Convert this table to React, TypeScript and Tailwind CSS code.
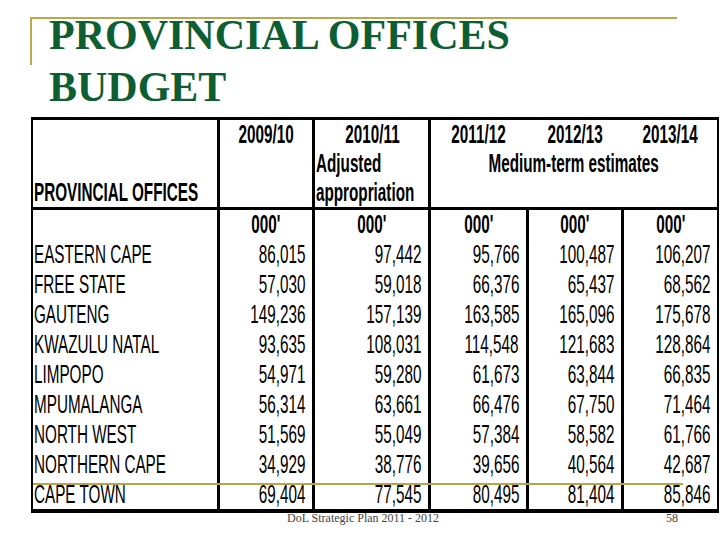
import React from 'react';

type Align = 'left' | 'right' | 'center';

const origins: Record<Align, string> = {
  left: 'origin-left',
  right: 'origin-right',
  center: 'origin-center',
};

// Arial Narrow look: Liberation Sans squeezed horizontally
const Sq = ({ children, align = 'left' }: { children: React.ReactNode; align?: Align }) => (
  <span className={`inline-block shrink-0 whitespace-nowrap scale-x-[0.61] ${origins[align]}`}>{children}</span>
);

const cols = [
  'w-[184px]',
  'w-[95px] border-l-[3px] border-black',
  'w-[116px] border-l-[3px] border-black',
  'w-[98px] border-l-[3px] border-black',
  'w-[95px] border-l-[3px] border-black',
  'w-[96px] border-l-[3px] border-black',
];

const rows: [string, string[]][] = [
  ['EASTERN CAPE', ['86,015', '97,442', '95,766', '100,487', '106,207']],
  ['FREE STATE', ['57,030', '59,018', '66,376', '65,437', '68,562']],
  ['GAUTENG', ['149,236', '157,139', '163,585', '165,096', '175,678']],
  ['KWAZULU NATAL', ['93,635', '108,031', '114,548', '121,683', '128,864']],
  ['LIMPOPO', ['54,971', '59,280', '61,673', '63,844', '66,835']],
  ['MPUMALANGA', ['56,314', '63,661', '66,476', '67,750', '71,464']],
  ['NORTH WEST', ['51,569', '55,049', '57,384', '58,582', '61,766']],
  ['NORTHERN CAPE', ['34,929', '38,776', '39,656', '40,564', '42,687']],
  ['CAPE TOWN', ['69,404', '77,545', '80,495', '81,404', '85,846']],
];

export default function App() {
  return (
    <div className="relative w-[720px] h-[540px] overflow-hidden bg-white">
      {/* slide template lines */}
      <div className="absolute left-[30px] top-[17px] w-[647px] h-[2px] bg-[#bba949]" />
      <div className="absolute left-[30px] top-[17px] w-[2px] h-[48px] bg-[#bba949]" />
      <div className="absolute left-[33px] top-[483px] w-[650px] h-[2px] bg-[#b9a544] z-10" />

      {/* Title */}
      <h1 className="pt-[9px] pl-[49px] font-['Liberation_Serif',serif] text-[42px] leading-[52px] font-bold text-[#0d5e33]">
        PROVINCIAL OFFICES
        <br />
        BUDGET
      </h1>

      {/* Table */}
      <div className="mt-[4px] ml-[31px] w-[688px] border-l-2 border-r-2 border-t-[3px] border-b-4 border-black font-['Liberation_Sans',Arial,sans-serif] text-[25px] text-black">
        {/* header */}
        <div className="flex h-[90px] border-b-[3px] border-black font-bold leading-[29px]">
          <div className={`${cols[0]} flex flex-col justify-end pl-[1px]`}>
            <div><Sq>PROVINCIAL OFFICES</Sq></div>
          </div>
          <div className={`${cols[1]} flex justify-center items-start`}>
            <Sq align="center">2009/10</Sq>
          </div>
          <div className={`${cols[2]} pl-[1px]`}>
            <div className="flex justify-center"><Sq align="center">2010/11</Sq></div>
            <div><Sq>Adjusted</Sq></div>
            <div><Sq>appropriation</Sq></div>
          </div>
          <div className="w-[289px] border-l-[3px] border-black">
            <div className="flex">
              <div className="w-[95px] flex justify-center"><Sq align="center">2011/12</Sq></div>
              <div className="w-[98px] flex justify-center"><Sq align="center">2012/13</Sq></div>
              <div className="w-[93px] flex justify-center"><Sq align="center">2013/14</Sq></div>
            </div>
            <div className="flex justify-center"><Sq align="center">Medium-term estimates</Sq></div>
          </div>
        </div>

        {/* units */}
        <div className="flex h-[29px] font-bold leading-[29px]">
          {cols.map((c, i) => (
            <div key={i} className={`${c} flex justify-center`}>
              {i > 0 && <Sq align="center">000'</Sq>}
            </div>
          ))}
        </div>

        {rows.map(([name, vals]) => (
          <div key={name} className="flex h-[30px] leading-[30px]">
            <div className={`${cols[0]} pl-[1px]`}>
              <Sq>{name}</Sq>
            </div>
            {vals.map((v, i) => (
              <div key={i} className={`${cols[i + 1]} flex justify-end pr-[7px]`}>
                <Sq align="right">{v}</Sq>
              </div>
            ))}
          </div>
        ))}
      </div>

      {/* footer */}
      <div className="-mt-[2px] flex font-['Liberation_Serif',serif] text-[12px] leading-[14px] text-[#444]">
        <span className="ml-[287px]">DoL Strategic Plan 2011 - 2012</span>
        <span className="ml-auto mr-[42px]">58</span>
      </div>
    </div>
  );
}
